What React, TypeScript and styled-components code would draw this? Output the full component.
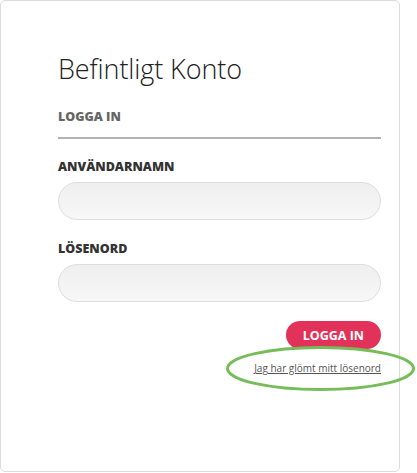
import React from "react";
import styled, { createGlobalStyle } from "styled-components";

const Global = createGlobalStyle`
  html, body { margin: 0; padding: 0; background: #ffffff; }
  body { font-family: "Open Sans", "Liberation Sans", sans-serif; }
`;

const Card = styled.div`
  box-sizing: border-box;
  width: 400px;
  height: 472px;
  border: 1px solid #dcdcdc;
  border-radius: 5px;
  padding: 49px 18px 0 57px;
  display: flex;
  flex-direction: column;
  background: #fff;
`;

const Title = styled.h1`
  margin: 0;
  font-weight: 300;
  font-size: 27px;
  line-height: 38px;
  color: #222;
  letter-spacing: -0.1px;
`;

const SectionHead = styled.h2`
  margin: 20px 0 0;
  font-size: 12.5px;
  font-weight: 800;
  color: #666;
  line-height: 18px;
  padding-bottom: 11px;
  border-bottom: 2px solid #b3b3b3;
`;

const Label = styled.label<{ $top: number }>`
  display: block;
  margin-top: ${(p) => p.$top}px;
  font-size: 12.5px;
  font-weight: 800;
  color: #333;
  line-height: 18px;
`;

const Input = styled.input`
  box-sizing: border-box;
  display: block;
  width: 100%;
  height: 38px;
  margin-top: 6px;
  border: 1px solid #dedede;
  border-radius: 19px;
  background: linear-gradient(#efefef, #f7f7f7);
  outline: none;
`;

const Actions = styled.div`
  margin-top: 19px;
  display: flex;
  flex-direction: column;
  align-items: flex-end;
`;

const Button = styled.button`
  height: 28px;
  padding: 0 17px;
  border: none;
  border-radius: 14px;
  background: #e3325a;
  color: #fff;
  font-family: "Open Sans", sans-serif;
  font-weight: 700;
  font-size: 12.5px;
`;

const ForgotWrap = styled.div`
  position: relative;
  margin-top: 12px;
`;

const Forgot = styled.a`
  display: block;
  font-size: 10px;
  color: #555;
  text-decoration: underline;
  line-height: 14px;
`;

const Ellipse = styled.svg`
  position: absolute;
  left: -28px;
  top: -15px;
  overflow: visible;
  pointer-events: none;
`;

export default function App() {
  return (
    <>
      <Global />
      <Card>
        <Title>Befintligt Konto</Title>
        <SectionHead>LOGGA IN</SectionHead>
        <Label $top={19}>ANVÄNDARNAMN</Label>
        <Input type="text" />
        <Label $top={20}>LÖSENORD</Label>
        <Input type="password" />
        <Actions>
          <Button>LOGGA IN</Button>
          <ForgotWrap>
            <Forgot href="#">Jag har glömt mitt lösenord</Forgot>
            <Ellipse width="189" height="45" viewBox="0 0 189 45">
              <ellipse cx="94.5" cy="22.5" rx="93" ry="21" fill="none" stroke="#76bd5a" strokeWidth="3" />
            </Ellipse>
          </ForgotWrap>
        </Actions>
      </Card>
    </>
  );
}
